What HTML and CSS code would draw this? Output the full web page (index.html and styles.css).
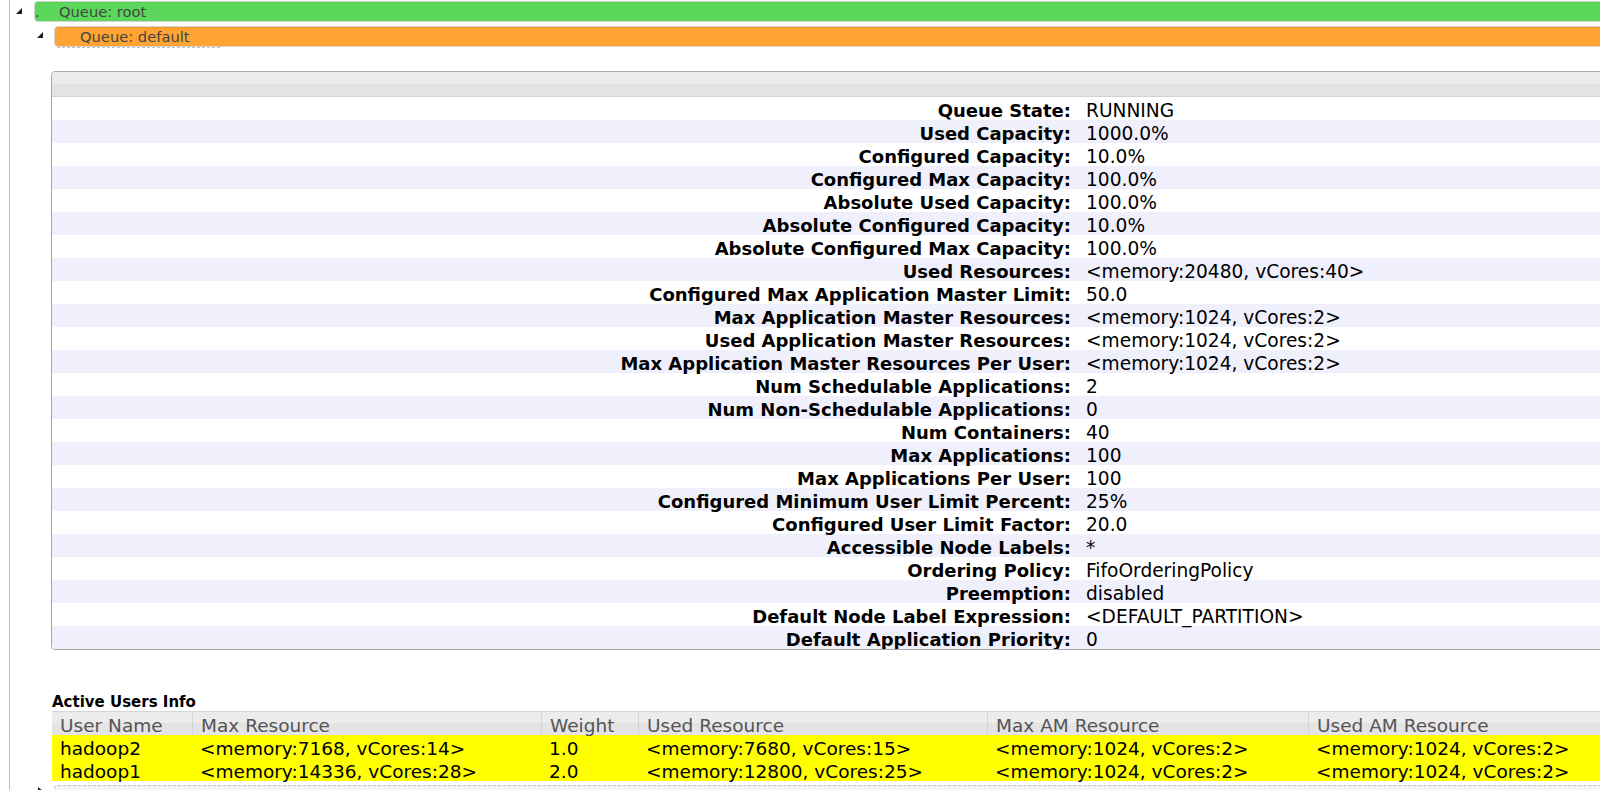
FILE: index.html
```html
<!DOCTYPE html>
<html>
<head>
<meta charset="utf-8">
<title>Scheduler</title>
<link rel="stylesheet" href="styles.css">
</head>
<body>
<div class="cs">
  <div class="node node-root">
    <div class="qrow">
      <svg class="tri" viewBox="0 0 6 6"><polygon points="6,0 6,6 0,6" fill="#1e1e1e"/></svg>
      <a class="qbar">
        <span class="qused under"></span>
        <span class="qdot">.</span>
        <span class="qlabel root-label">Queue: root</span>
      </a>
    </div>
    <div class="children">
      <div class="node">
        <div class="qrow">
          <svg class="tri" viewBox="0 0 6 6"><polygon points="6,0 6,6 0,6" fill="#1e1e1e"/></svg>
          <a class="qbar">
            <span class="qused over"></span>
            <span class="qlabel">Queue: default</span>
            <span class="qgiven"></span>
          </a>
        </div>
        <div class="qinfo">
          <div class="qinfo-head"></div>
          <div class="irows">
            <div class="irow"><span class="k">Queue State:</span><span class="v">RUNNING</span></div>
            <div class="irow"><span class="k">Used Capacity:</span><span class="v">1000.0%</span></div>
            <div class="irow"><span class="k">Configured Capacity:</span><span class="v">10.0%</span></div>
            <div class="irow"><span class="k">Configured Max Capacity:</span><span class="v">100.0%</span></div>
            <div class="irow"><span class="k">Absolute Used Capacity:</span><span class="v">100.0%</span></div>
            <div class="irow"><span class="k">Absolute Configured Capacity:</span><span class="v">10.0%</span></div>
            <div class="irow"><span class="k">Absolute Configured Max Capacity:</span><span class="v">100.0%</span></div>
            <div class="irow"><span class="k">Used Resources:</span><span class="v">&lt;memory:20480, vCores:40&gt;</span></div>
            <div class="irow"><span class="k">Configured Max Application Master Limit:</span><span class="v">50.0</span></div>
            <div class="irow"><span class="k">Max Application Master Resources:</span><span class="v">&lt;memory:1024, vCores:2&gt;</span></div>
            <div class="irow"><span class="k">Used Application Master Resources:</span><span class="v">&lt;memory:1024, vCores:2&gt;</span></div>
            <div class="irow"><span class="k">Max Application Master Resources Per User:</span><span class="v">&lt;memory:1024, vCores:2&gt;</span></div>
            <div class="irow"><span class="k">Num Schedulable Applications:</span><span class="v">2</span></div>
            <div class="irow"><span class="k">Num Non-Schedulable Applications:</span><span class="v">0</span></div>
            <div class="irow"><span class="k">Num Containers:</span><span class="v">40</span></div>
            <div class="irow"><span class="k">Max Applications:</span><span class="v">100</span></div>
            <div class="irow"><span class="k">Max Applications Per User:</span><span class="v">100</span></div>
            <div class="irow"><span class="k">Configured Minimum User Limit Percent:</span><span class="v">25%</span></div>
            <div class="irow"><span class="k">Configured User Limit Factor:</span><span class="v">20.0</span></div>
            <div class="irow"><span class="k">Accessible Node Labels:</span><span class="v">*</span></div>
            <div class="irow"><span class="k">Ordering Policy:</span><span class="v">FifoOrderingPolicy</span></div>
            <div class="irow"><span class="k">Preemption:</span><span class="v">disabled</span></div>
            <div class="irow"><span class="k">Default Node Label Expression:</span><span class="v">&lt;DEFAULT_PARTITION&gt;</span></div>
            <div class="irow"><span class="k">Default Application Priority:</span><span class="v">0</span></div>
          </div>
        </div>
        <div class="users-title">Active Users Info</div>
        <div class="users">
          <div class="urow uhead">
            <span>User Name</span>
            <span>Max Resource</span>
            <span>Weight</span>
            <span>Used Resource</span>
            <span>Max AM Resource</span>
            <span>Used AM Resource</span>
          </div>
          <div class="urow active">
            <span>hadoop2</span>
            <span>&lt;memory:7168, vCores:14&gt;</span>
            <span>1.0</span>
            <span>&lt;memory:7680, vCores:15&gt;</span>
            <span>&lt;memory:1024, vCores:2&gt;</span>
            <span>&lt;memory:1024, vCores:2&gt;</span>
          </div>
          <div class="urow active">
            <span>hadoop1</span>
            <span>&lt;memory:14336, vCores:28&gt;</span>
            <span>2.0</span>
            <span>&lt;memory:12800, vCores:25&gt;</span>
            <span>&lt;memory:1024, vCores:2&gt;</span>
            <span>&lt;memory:1024, vCores:2&gt;</span>
          </div>
        </div>
      </div>
      <div class="node node-next">
        <div class="qrow">
          <svg class="tri tri-closed" viewBox="0 0 5 8"><polygon points="0,0 5,4 0,8" fill="#1e1e1e"/></svg>
          <a class="qbar plain">
            <span class="qlabel">Queue: prod</span>
          </a>
        </div>
      </div>
    </div>
  </div>
</div>
</body>
</html>
```

FILE: styles.css
```css
html, body {
  margin: 0;
  padding: 0;
  overflow: hidden;
  background: #ffffff;
}

body {
  width: 1600px;
  height: 790px;
  font-family: "DejaVu Sans", Verdana, sans-serif;
  color: #000;
}

.cs {
  margin-left: 9px;
  border-left: 1px solid #bdbdbd;
  width: 1700px;
  height: 790px;
}

.node-root > .qrow {
  padding-top: 1px;
}

.qrow {
  display: flex;
  align-items: flex-start;
}

.tri {
  display: block;
  flex: none;
  width: 6px;
  height: 6px;
  margin: 7px 12px 0 6px;
}

.children {
  padding-left: 20px;
}

.children .tri {
  margin: 6px 11px 0 7px;
}

.children > .node:first-child > .qrow {
  margin-top: 4px;
}

.qbar {
  position: relative;
  flex: 1;
  display: flex;
  align-items: flex-start;
  height: 19px;
  border: 1px solid #d3d3d3;
  border-radius: 4px;
  background: #f3f3f3;
  font-size: 14.7px;
  line-height: 19px;
  color: #444;
  text-decoration: none;
}

.qused {
  position: absolute;
  top: 0;
  left: 0;
  right: 0;
  bottom: 0;
  border-radius: 3px;
}

.qused.under {
  background: #5bd75b;
  border-top: 1px solid #52cf52;
}

.qused.over {
  background: #ffa333;
  border-top: 1px solid #f59a2a;
}

.qgiven {
  position: absolute;
  left: 2px;
  bottom: -2px;
  width: 163px;
  height: 0;
  border-bottom: 1px dashed #bfbfbf;
}

.qdot {
  position: relative;
  width: 5px;
  color: #333;
}

.qlabel {
  position: relative;
  padding-left: 25px;
}

.qlabel.root-label {
  padding-left: 19px;
}

/* queue info box */
.qinfo {
  margin: 24px 0 0 21px;
  border: 1px solid #a9a9a9;
  border-radius: 4px;
  overflow: hidden;
}

.qinfo-head {
  height: 24px;
  background: linear-gradient(#ebebeb 50%, #e3e3e3 50%);
  border-bottom: 1px solid #d3d3d3;
}

.irow {
  display: grid;
  grid-template-columns: 1026px 1fr;
  height: 23px;
  box-sizing: border-box;
  padding-top: 5px;
  font-size: 18px;
  line-height: 18px;
  white-space: nowrap;
}

.irow:nth-child(even) {
  background: #f0f0fc;
}

.irow .k {
  font-weight: bold;
  text-align: right;
  padding-right: 7px;
}

.irow .v {
  padding-left: 8px;
  font-size: 18.6px;
}

/* active users */
.users-title {
  margin: 43px 0 0 22px;
  font-size: 15px;
  font-weight: bold;
  line-height: 18px;
}

.users {
  margin-left: 22px;
}

.urow {
  display: grid;
  grid-template-columns: 140px 349px 97px 349px 321px 330px;
  font-size: 18.5px;
  line-height: 18px;
  white-space: nowrap;
}

.urow > span {
  box-sizing: border-box;
  height: 23px;
  padding: 5px 0 0 8px;
}

.uhead {
  border-top: 1px solid #d6d6d6;
  background: linear-gradient(#ececec 50%, #e4e4e4 50%);
  color: #555;
}

.uhead > span + span {
  border-left: 1px solid #d4d4d4;
  padding-left: 8px;
}

.urow.active {
  background: #ffff00;
}

.node-next > .qrow {
  margin-top: 4px;
}

.tri.tri-closed {
  width: 5px;
  height: 8px;
  margin: 2px 11px 0 8px;
}

.qbar.plain {
  border-style: dashed;
  border-color: #c4c4c4;
}
```
